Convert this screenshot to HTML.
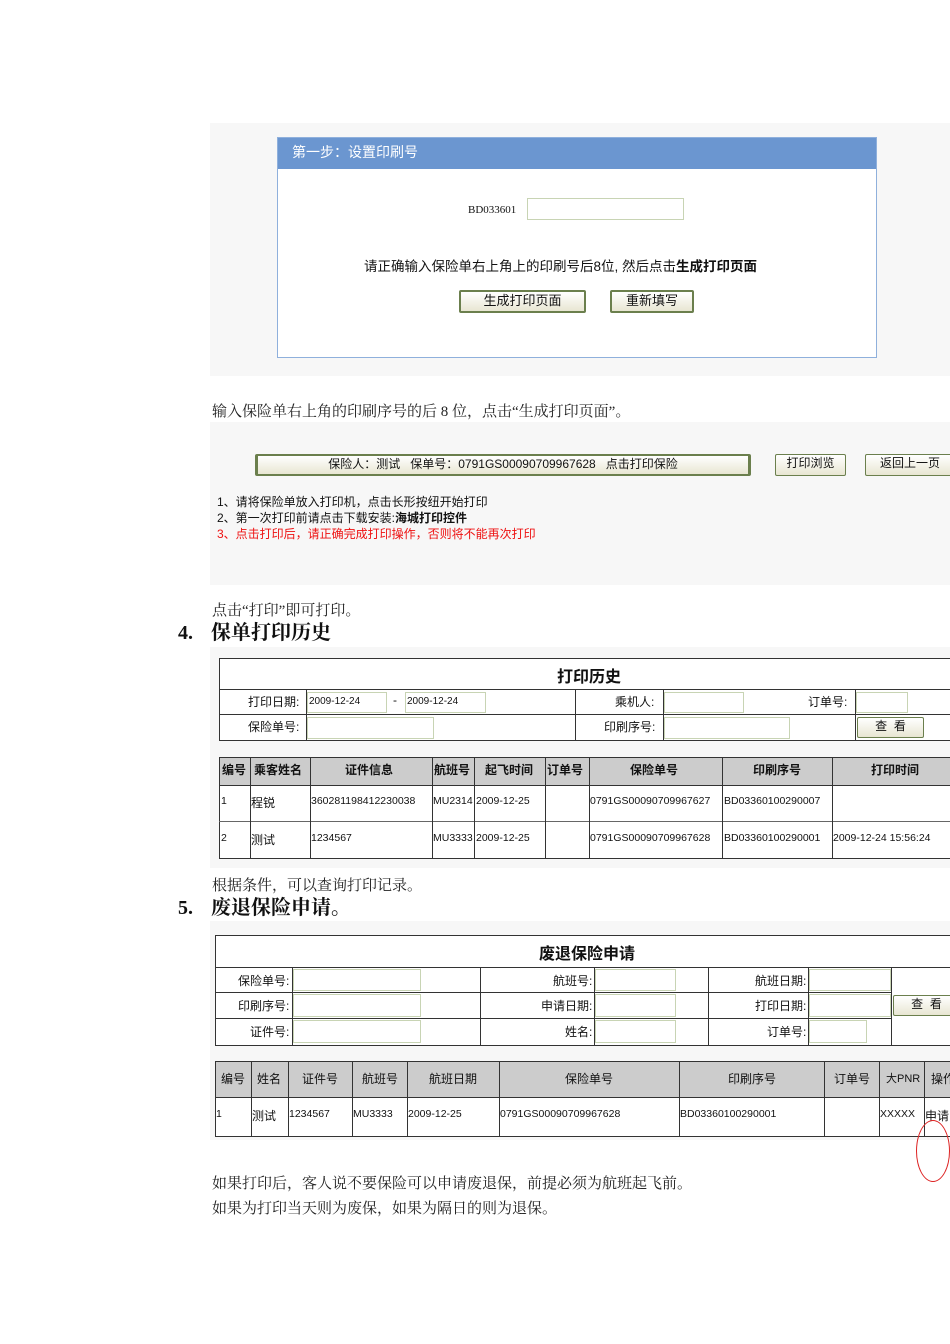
<!DOCTYPE html>
<html><head><meta charset="utf-8"><style>
body{margin:0;width:950px;height:1344px;position:relative;background:#fff;overflow:hidden;font-family:"Liberation Sans","Noto Sans CJK SC",sans-serif;color:#111}
.a{position:absolute}
.bg{position:absolute;background:#f7f7f7}
.s{font-family:"Liberation Serif","Noto Serif CJK SC",serif;font-size:15px;color:#222;position:absolute;white-space:nowrap}
.h{font-family:"Liberation Serif","Noto Serif CJK SC",serif;font-size:20px;font-weight:bold;position:absolute;white-space:nowrap;line-height:26px}
.h span{display:inline-block;width:33px}
.in{position:absolute;background:#fff;border:1px solid #c8d4b4;box-sizing:border-box;font-size:10px;line-height:18px;padding-left:1px}
.btn{position:absolute;box-sizing:border-box;border:2px solid #6b7f4d;border-radius:2px;background:linear-gradient(#fff,#e8e6d2);font-size:13px;text-align:center}
.t{font-size:12px;white-space:nowrap;position:absolute}
.v{position:absolute;width:1px;background:#333}
.hl{position:absolute;height:1px;background:#333}
</style></head><body>

<div class="bg" style="left:210px;top:123px;width:740px;height:253px"></div>
<div class="a" style="left:277px;top:137px;width:598px;height:219px;border:1px solid #8fb0dc;background:#fff"></div>
<div class="a" style="left:278px;top:138px;width:598px;height:31px;background:#6b96d0"></div>
<div class="t" style="left:292px;top:142px;color:#fff;font-size:14px">第一步：设置印刷号</div>
<div class="t" style="left:468px;top:204px;font-size:11px;font-family:'Liberation Serif',serif">BD033601</div>
<div class="in" style="left:527px;top:198px;width:157px;height:22px"></div>
<div class="t" style="left:364px;top:255px;font-size:13.5px">请正确输入保险单右上角上的印刷号后8位, 然后点击<b>生成打印页面</b></div>
<div class="btn" style="left:459px;top:290px;width:127px;height:23px;line-height:18px">生成打印页面</div>
<div class="btn" style="left:610px;top:290px;width:84px;height:23px;line-height:18px">重新填写</div>

<div class="s" style="left:212px;top:400px">输入保险单右上角的印刷序号的后 8 位，点击“生成打印页面”。</div>

<div class="bg" style="left:210px;top:422px;width:740px;height:163px"></div>
<div class="btn" style="left:255px;top:454px;width:496px;height:22px;line-height:17px;font-size:12px;border-width:2px 3px">保险人：测试&nbsp;&nbsp;&nbsp;保单号：0791GS00090709967628&nbsp;&nbsp;&nbsp;点击打印保险</div>
<div class="btn" style="left:775px;top:454px;width:71px;height:22px;line-height:17px;font-size:12px;border-width:1px">打印浏览</div>
<div class="btn" style="left:865px;top:454px;width:90px;height:22px;line-height:17px;font-size:12px;border-width:1px">返回上一页</div>
<div class="t" style="left:217px;top:493px">1、请将保险单放入打印机，点击长形按纽开始打印</div>
<div class="t" style="left:217px;top:509px">2、第一次打印前请点击下载安装:<b>海城打印控件</b></div>
<div class="t" style="left:217px;top:525px;color:#e11">3、点击打印后，请正确完成打印操作，否则将不能再次打印</div>

<div class="s" style="left:212px;top:599px">点击“打印”即可打印。</div>
<div class="h" style="left:178px;top:620px"><span>4.</span>保单打印历史</div>

<div class="bg" style="left:210px;top:647px;width:740px;height:221px"></div>
<div class="a" style="left:219px;top:658px;width:740px;height:83px;border:1px solid #333;box-sizing:border-box;background:#fff"></div>
<div class="hl" style="left:219px;top:689px;width:731px"></div>
<div class="hl" style="left:219px;top:714px;width:731px"></div>
<div class="v" style="left:306px;top:689px;height:52px"></div>
<div class="v" style="left:575px;top:689px;height:52px"></div>
<div class="v" style="left:663px;top:689px;height:52px"></div>
<div class="v" style="left:855px;top:689px;height:52px"></div>
<div class="t" style="left:557px;top:663px;font-size:16px;font-weight:bold">打印历史</div>
<div class="t" style="left:248px;top:693px">打印日期:</div>
<div class="in" style="left:307px;top:692px;width:80px;height:21px">2009-12-24</div>
<div class="t" style="left:393px;top:693px">-</div>
<div class="in" style="left:405px;top:692px;width:81px;height:21px">2009-12-24</div>
<div class="t" style="left:615px;top:693px">乘机人:</div>
<div class="in" style="left:664px;top:692px;width:80px;height:21px"></div>
<div class="t" style="left:808px;top:693px">订单号:</div>
<div class="in" style="left:856px;top:692px;width:52px;height:21px"></div>
<div class="t" style="left:248px;top:718px">保险单号:</div>
<div class="in" style="left:307px;top:717px;width:127px;height:22px"></div>
<div class="t" style="left:604px;top:718px">印刷序号:</div>
<div class="in" style="left:664px;top:717px;width:126px;height:22px"></div>
<div class="btn" style="left:857px;top:717px;width:67px;height:21px;line-height:17px;font-size:12px;border-width:1px">查&nbsp;&nbsp;看</div>

<div class="a" style="left:219px;top:757px;width:740px;height:102px;border:1px solid #333;box-sizing:border-box;background:#fff"></div>
<div class="a" style="left:220px;top:758px;width:730px;height:27px;background:#ccc"></div>
<div class="hl" style="left:219px;top:785px;width:731px"></div>
<div class="hl" style="left:219px;top:821px;width:731px;background:#666"></div>
<div class="v" style="left:250px;top:757px;height:102px"></div>
<div class="v" style="left:310px;top:757px;height:102px"></div>
<div class="v" style="left:432px;top:757px;height:102px"></div>
<div class="v" style="left:474px;top:757px;height:102px"></div>
<div class="v" style="left:545px;top:757px;height:102px"></div>
<div class="v" style="left:589px;top:757px;height:102px"></div>
<div class="v" style="left:722px;top:757px;height:102px"></div>
<div class="v" style="left:832px;top:757px;height:102px"></div>
<div class="t" style="left:222px;top:761px;font-weight:bold">编号</div>
<div class="t" style="left:254px;top:761px;font-weight:bold">乘客姓名</div>
<div class="t" style="left:345px;top:761px;font-weight:bold">证件信息</div>
<div class="t" style="left:434px;top:761px;font-weight:bold">航班号</div>
<div class="t" style="left:485px;top:761px;font-weight:bold">起飞时间</div>
<div class="t" style="left:547px;top:761px;font-weight:bold">订单号</div>
<div class="t" style="left:630px;top:761px;font-weight:bold">保险单号</div>
<div class="t" style="left:753px;top:761px;font-weight:bold">印刷序号</div>
<div class="t" style="left:871px;top:761px;font-weight:bold">打印时间</div>
<div class="t" style="left:221px;top:795px;font-size:10.5px">1</div>
<div class="t" style="left:251px;top:794px">程锐</div>
<div class="t" style="left:311px;top:795px;font-size:10.5px">360281198412230038</div>
<div class="t" style="left:433px;top:795px;font-size:10.5px">MU2314</div>
<div class="t" style="left:476px;top:795px;font-size:10.5px">2009-12-25</div>
<div class="t" style="left:590px;top:795px;font-size:10.5px">0791GS00090709967627</div>
<div class="t" style="left:724px;top:795px;font-size:10.5px">BD03360100290007</div>
<div class="t" style="left:221px;top:832px;font-size:10.5px">2</div>
<div class="t" style="left:251px;top:831px">测试</div>
<div class="t" style="left:311px;top:832px;font-size:10.5px">1234567</div>
<div class="t" style="left:433px;top:832px;font-size:10.5px">MU3333</div>
<div class="t" style="left:476px;top:832px;font-size:10.5px">2009-12-25</div>
<div class="t" style="left:590px;top:832px;font-size:10.5px">0791GS00090709967628</div>
<div class="t" style="left:724px;top:832px;font-size:10.5px">BD03360100290001</div>
<div class="t" style="left:833px;top:832px;font-size:10.5px">2009-12-24 15:56:24</div>

<div class="s" style="left:212px;top:874px">根据条件，可以查询打印记录。</div>
<div class="h" style="left:178px;top:895px"><span>5.</span>废退保险申请。</div>

<div class="bg" style="left:210px;top:921px;width:740px;height:219px"></div>
<div class="a" style="left:215px;top:935px;width:740px;height:111px;border:1px solid #333;box-sizing:border-box;background:#fff"></div>
<div class="hl" style="left:215px;top:967px;width:735px"></div>
<div class="hl" style="left:215px;top:992px;width:677px"></div>
<div class="hl" style="left:215px;top:1018px;width:677px"></div>
<div class="v" style="left:292px;top:967px;height:78px"></div>
<div class="v" style="left:480px;top:967px;height:78px"></div>
<div class="v" style="left:594px;top:967px;height:78px"></div>
<div class="v" style="left:708px;top:967px;height:78px"></div>
<div class="v" style="left:808px;top:967px;height:78px"></div>
<div class="v" style="left:891px;top:967px;height:78px"></div>
<div class="t" style="left:539px;top:940px;font-size:16px;font-weight:bold">废退保险申请</div>
<div class="t" style="left:238px;top:972px">保险单号:</div>
<div class="t" style="left:238px;top:997px">印刷序号:</div>
<div class="t" style="left:250px;top:1023px">证件号:</div>
<div class="t" style="left:553px;top:972px">航班号:</div>
<div class="t" style="left:541px;top:997px">申请日期:</div>
<div class="t" style="left:565px;top:1023px">姓名:</div>
<div class="t" style="left:755px;top:972px">航班日期:</div>
<div class="t" style="left:755px;top:997px">打印日期:</div>
<div class="t" style="left:767px;top:1023px">订单号:</div>
<div class="in" style="left:293px;top:969px;width:128px;height:22px"></div>
<div class="in" style="left:293px;top:994px;width:128px;height:23px"></div>
<div class="in" style="left:293px;top:1020px;width:128px;height:23px"></div>
<div class="in" style="left:595px;top:969px;width:81px;height:22px"></div>
<div class="in" style="left:595px;top:994px;width:81px;height:23px"></div>
<div class="in" style="left:595px;top:1020px;width:81px;height:23px"></div>
<div class="in" style="left:809px;top:969px;width:82px;height:22px"></div>
<div class="in" style="left:809px;top:994px;width:82px;height:23px"></div>
<div class="in" style="left:809px;top:1020px;width:58px;height:23px"></div>
<div class="btn" style="left:893px;top:995px;width:67px;height:21px;line-height:17px;font-size:12px;border-width:1px">查&nbsp;&nbsp;看</div>

<div class="a" style="left:215px;top:1061px;width:740px;height:76px;border:1px solid #333;box-sizing:border-box;background:#fff"></div>
<div class="a" style="left:216px;top:1062px;width:734px;height:35px;background:#ccc"></div>
<div class="hl" style="left:215px;top:1097px;width:735px"></div>
<div class="v" style="left:251px;top:1061px;height:76px"></div>
<div class="v" style="left:288px;top:1061px;height:76px"></div>
<div class="v" style="left:352px;top:1061px;height:76px"></div>
<div class="v" style="left:407px;top:1061px;height:76px"></div>
<div class="v" style="left:499px;top:1061px;height:76px"></div>
<div class="v" style="left:679px;top:1061px;height:76px"></div>
<div class="v" style="left:824px;top:1061px;height:76px"></div>
<div class="v" style="left:879px;top:1061px;height:76px"></div>
<div class="v" style="left:924px;top:1061px;height:76px"></div>
<div class="t" style="left:221px;top:1070px">编号</div>
<div class="t" style="left:257px;top:1070px">姓名</div>
<div class="t" style="left:302px;top:1070px">证件号</div>
<div class="t" style="left:362px;top:1070px">航班号</div>
<div class="t" style="left:429px;top:1070px">航班日期</div>
<div class="t" style="left:565px;top:1070px">保险单号</div>
<div class="t" style="left:728px;top:1070px">印刷序号</div>
<div class="t" style="left:834px;top:1070px">订单号</div>
<div class="t" style="left:886px;top:1070px;font-size:11px">大PNR</div>
<div class="t" style="left:931px;top:1070px">操作</div>
<div class="t" style="left:216px;top:1108px;font-size:10.5px">1</div>
<div class="t" style="left:252px;top:1107px">测试</div>
<div class="t" style="left:289px;top:1108px;font-size:10.5px">1234567</div>
<div class="t" style="left:353px;top:1108px;font-size:10.5px">MU3333</div>
<div class="t" style="left:408px;top:1108px;font-size:10.5px">2009-12-25</div>
<div class="t" style="left:500px;top:1108px;font-size:10.5px">0791GS00090709967628</div>
<div class="t" style="left:680px;top:1108px;font-size:10.5px">BD03360100290001</div>
<div class="t" style="left:880px;top:1108px;font-size:10.5px">XXXXX</div>
<div class="t" style="left:925px;top:1107px">申请</div>
<div class="a" style="left:916px;top:1120px;width:34px;height:62px;border:1px solid #d22;border-radius:50%;box-sizing:border-box"></div>

<div class="s" style="left:212px;top:1172px">如果打印后，客人说不要保险可以申请废退保，前提必须为航班起飞前。</div>
<div class="s" style="left:212px;top:1197px">如果为打印当天则为废保，如果为隔日的则为退保。</div>
</body></html>
